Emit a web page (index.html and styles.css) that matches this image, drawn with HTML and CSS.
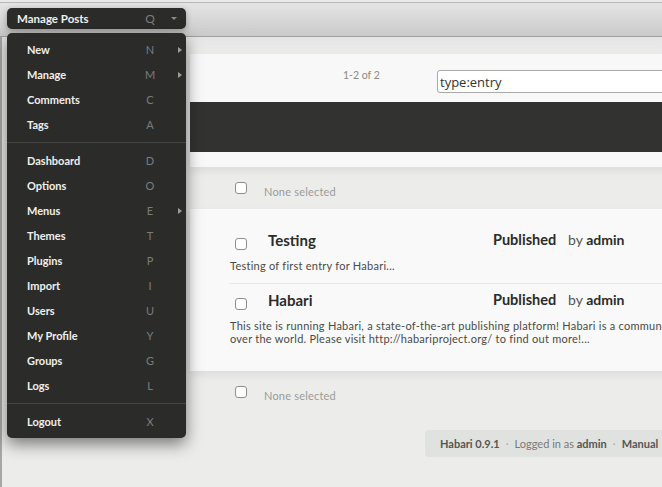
FILE: index.html
```html
<!DOCTYPE html>
<html lang="en">
<head>
<meta charset="utf-8">
<title>Manage Posts</title>
<link rel="stylesheet" href="styles.css">
</head>
<body>
<div class="page">
  <header class="topbar"></header>
  <div class="main">
    <div class="content">
      <section class="panel search-panel">
        <div class="search-row">
          <span class="count">1-2 of 2</span>
          <input class="search" type="text" value="type:entry">
        </div>
        <div class="darkbar"></div>
      </section>

      <div class="selrow">
        <span class="check"></span>
        <span class="sel-text">None selected</span>
      </div>

      <section class="panel posts">
        <article class="row">
          <div class="row-head">
            <span class="check"></span>
            <span class="title">Testing</span>
            <span class="status">Published</span>
            <span class="author">by <b>admin</b></span>
          </div>
          <p class="excerpt">Testing of first entry for Habari...</p>
        </article>
        <article class="row">
          <div class="row-head">
            <span class="check"></span>
            <span class="title">Habari</span>
            <span class="status">Published</span>
            <span class="author">by <b>admin</b></span>
          </div>
          <p class="excerpt">This site is running Habari, a state-of-the-art publishing platform! Habari is a community-driven project created and supported by people from all<br>over the world. Please visit http://habariproject.org/ to find out more!...</p>
        </article>
      </section>

      <div class="selrow">
        <span class="check"></span>
        <span class="sel-text">None selected</span>
      </div>

      <footer class="footer">
        <b>Habari 0.9.1</b><span class="dot">·</span>Logged in as <b>admin</b><span class="dot">·</span><b>Manual</b>
      </footer>
    </div>
  </div>

  <nav class="menu">
    <div class="menu-head">
      <span class="menu-title">Manage Posts</span>
      <span class="key">Q</span>
      <span class="caret"></span>
    </div>
    <ul class="menu-list">
      <li class="item"><span>New</span><span class="key">N</span><span class="sub"></span></li>
      <li class="item"><span>Manage</span><span class="key">M</span><span class="sub"></span></li>
      <li class="item"><span>Comments</span><span class="key">C</span></li>
      <li class="item"><span>Tags</span><span class="key">A</span></li>
      <li class="sep"></li>
      <li class="item"><span>Dashboard</span><span class="key">D</span></li>
      <li class="item"><span>Options</span><span class="key">O</span></li>
      <li class="item"><span>Menus</span><span class="key">E</span><span class="sub"></span></li>
      <li class="item"><span>Themes</span><span class="key">T</span></li>
      <li class="item"><span>Plugins</span><span class="key">P</span></li>
      <li class="item"><span>Import</span><span class="key">I</span></li>
      <li class="item"><span>Users</span><span class="key">U</span></li>
      <li class="item"><span>My Profile</span><span class="key">Y</span></li>
      <li class="item"><span>Groups</span><span class="key">G</span></li>
      <li class="item"><span>Logs</span><span class="key">L</span></li>
      <li class="sep"></li>
      <li class="item"><span>Logout</span><span class="key">X</span></li>
    </ul>
  </nav>
</div>
</body>
</html>
```
FILE: styles.css
```css
html, body {
  margin: 0;
  padding: 0;
  overflow: hidden;
}
body {
  width: 662px;
  height: 487px;
  background: #edeeec;
  font-family: Lato, "Open Sans", sans-serif;
  color: #444;
}
.page {
  position: relative;
  height: 485px;
  padding-top: 2px;
  background: #e8e9e8;
}
.topbar {
  height: 33px;
  border-top: 1px solid #b7b8b7;
  border-bottom: 1px solid #9fa09f;
  background: linear-gradient(#e3e4e3, #c9cac9);
}
.main {
  border-left: 2px solid #a6a7a6;
  height: 450px;
  background: linear-gradient(#e4e5e4, #ecedeb 18px);
}
.content {
  margin-left: 188px;
  width: 620px;
  padding-top: 17px;
}
.panel {
  background: #f7f8f7;
  box-shadow: 0 4px 8px rgba(0, 0, 0, 0.07);
}
.search-panel {
  height: 113px;
}
.search-row {
  height: 48px;
  box-sizing: border-box;
  padding: 16px 0 0 153px;
  display: flex;
  align-items: flex-start;
}
.count {
  width: 94px;
  font-size: 10.5px;
  line-height: 12px;
  margin-top: -1px;
  color: #8a8a86;
}
.search {
  box-sizing: border-box;
  width: 260px;
  height: 23px;
  margin: 0;
  padding: 0 0 0 2px;
  border: 1px solid #a9a9a7;
  border-radius: 3px;
  background: #fff;
  font-family: "Open Sans", sans-serif;
  font-size: 13px;
  color: #333;
}
.darkbar {
  height: 50px;
  background: #323331;
}
.selrow {
  height: 42px;
  box-sizing: border-box;
  padding: 15px 0 0 45px;
  display: flex;
  align-items: flex-start;
}
.check {
  display: inline-block;
  box-sizing: border-box;
  width: 12px;
  height: 12px;
  border: 1px solid #8e8e8c;
  border-radius: 3px;
  background: #fff;
}
.sel-text {
  margin-left: 17px;
  margin-top: 3px;
  font-size: 11px;
  line-height: 13px;
  letter-spacing: 0.2px;
  color: #9a9b98;
}
.posts {
  padding: 15px 0 15px 40px;
  background: #f8f9f8;
}
.row {
  padding: 7px 0 11px;
}
.row + .row {
  border-top: 1px solid #e6e7e5;
}
.row-head {
  display: grid;
  grid-template-columns: 33px 225px 75px auto;
  align-items: start;
  height: 18px;
  padding-left: 5px;
  line-height: 18px;
}
.row-head .check {
  margin-top: 7px;
}
.title, .status {
  font-size: 15px;
  font-weight: 700;
  color: #2c2c2a;
}
.status {
  font-size: 14.5px;
}
.author {
  font-size: 14px;
  color: #555;
}
.author b {
  color: #2c2c2a;
}
.excerpt {
  margin: 10px 0 0;
  font-size: 11px;
  line-height: 13px;
  letter-spacing: 0.25px;
  color: #4a4a48;
  white-space: nowrap;
}
.footer {
  margin: 17px 0 0 235px;
  height: 27px;
  padding-left: 15px;
  border-radius: 4px;
  background: #e0e2df;
  font-size: 11px;
  line-height: 27px;
  color: #7a7a78;
  white-space: nowrap;
}
.footer b {
  color: #555653;
}
.dot {
  color: #b0b0ae;
  margin: 0 6px;
}

/* dropdown menu overlay */
.menu {
  position: absolute;
  left: 7px;
  top: 8px;
  width: 179px;
  color: #efefed;
  font-weight: 700;
}
.menu-head {
  height: 21px;
  border-radius: 5px;
  background: #2b2c2a;
  display: grid;
  grid-template-columns: 125px 16px 1fr;
  align-items: center;
  padding-left: 10px;
  box-shadow: 0 2px 6px rgba(0, 0, 0, 0.3);
}
.menu-title {
  font-size: 11.5px;
}
.menu-head .key {
  font-size: 12px;
}
.caret {
  justify-self: start;
  margin-left: 13px;
  width: 0;
  height: 0;
  border-left: 3px solid transparent;
  border-right: 3px solid transparent;
  border-top: 3px solid #8a8b89;
}
.menu-list {
  list-style: none;
  margin: 4px 0 0;
  padding: 4px 0;
  border-radius: 5px;
  background: #2b2c2a;
  box-shadow: 0 6px 16px rgba(0, 0, 0, 0.5);
}
.item {
  height: 25px;
  display: grid;
  grid-template-columns: 115px 16px 1fr;
  align-items: center;
  padding-left: 20px;
  font-size: 11px;
}
.key {
  text-align: center;
  color: #7b7c7a;
  font-weight: 400;
}
.sub {
  justify-self: start;
  margin-left: 20px;
  width: 0;
  height: 0;
  border-top: 3px solid transparent;
  border-bottom: 3px solid transparent;
  border-left: 4px solid #9c9d9b;
}
.sep {
  height: 1px;
  margin: 5px 0;
  background: #454644;
}
```
